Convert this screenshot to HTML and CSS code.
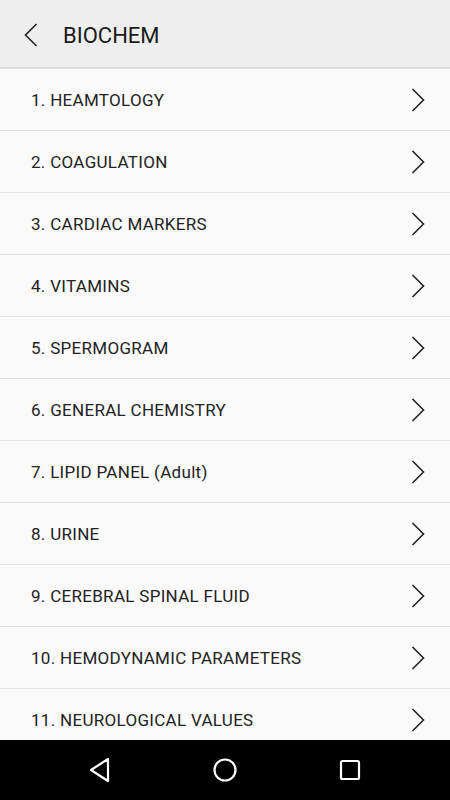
FILE: index.html
```html
<!DOCTYPE html>
<html lang="en">
<head>
    <meta charset="UTF-8">
    <meta name="viewport" content="width=device-width, initial-scale=1.0">
    <title>BIOCHEM</title>
    <link rel="stylesheet" href="styles.css">
</head>
<body>
    <!-- Верхняя панель -->
    <div class="toolbar">
        <a class="back" href="#">
            <svg width="14" height="24" viewBox="0 0 14 24"><path d="M12.5 1 L1.5 12 L12.5 23" fill="none" stroke="#222" stroke-width="1.6"/></svg>
        </a>
        <h1>BIOCHEM</h1>
    </div>

    <!-- Список разделов -->
    <div class="list">
        <a class="row" href="#"><span>1. HEAMTOLOGY</span><svg class="chev" width="14" height="24" viewBox="0 0 14 24"><path d="M1.5 1 L12.5 12 L1.5 23" fill="none" stroke="#222" stroke-width="1.6"/></svg></a>
        <a class="row" href="#"><span>2. COAGULATION</span><svg class="chev" width="14" height="24" viewBox="0 0 14 24"><path d="M1.5 1 L12.5 12 L1.5 23" fill="none" stroke="#222" stroke-width="1.6"/></svg></a>
        <a class="row" href="#"><span>3. CARDIAC MARKERS</span><svg class="chev" width="14" height="24" viewBox="0 0 14 24"><path d="M1.5 1 L12.5 12 L1.5 23" fill="none" stroke="#222" stroke-width="1.6"/></svg></a>
        <a class="row" href="#"><span>4. VITAMINS</span><svg class="chev" width="14" height="24" viewBox="0 0 14 24"><path d="M1.5 1 L12.5 12 L1.5 23" fill="none" stroke="#222" stroke-width="1.6"/></svg></a>
        <a class="row" href="#"><span>5. SPERMOGRAM</span><svg class="chev" width="14" height="24" viewBox="0 0 14 24"><path d="M1.5 1 L12.5 12 L1.5 23" fill="none" stroke="#222" stroke-width="1.6"/></svg></a>
        <a class="row" href="#"><span>6. GENERAL CHEMISTRY</span><svg class="chev" width="14" height="24" viewBox="0 0 14 24"><path d="M1.5 1 L12.5 12 L1.5 23" fill="none" stroke="#222" stroke-width="1.6"/></svg></a>
        <a class="row" href="#"><span>7. LIPID PANEL (Adult)</span><svg class="chev" width="14" height="24" viewBox="0 0 14 24"><path d="M1.5 1 L12.5 12 L1.5 23" fill="none" stroke="#222" stroke-width="1.6"/></svg></a>
        <a class="row" href="#"><span>8. URINE</span><svg class="chev" width="14" height="24" viewBox="0 0 14 24"><path d="M1.5 1 L12.5 12 L1.5 23" fill="none" stroke="#222" stroke-width="1.6"/></svg></a>
        <a class="row" href="#"><span>9. CEREBRAL SPINAL FLUID</span><svg class="chev" width="14" height="24" viewBox="0 0 14 24"><path d="M1.5 1 L12.5 12 L1.5 23" fill="none" stroke="#222" stroke-width="1.6"/></svg></a>
        <a class="row" href="#"><span>10. HEMODYNAMIC PARAMETERS</span><svg class="chev" width="14" height="24" viewBox="0 0 14 24"><path d="M1.5 1 L12.5 12 L1.5 23" fill="none" stroke="#222" stroke-width="1.6"/></svg></a>
        <a class="row" href="#"><span>11. NEUROLOGICAL VALUES</span><svg class="chev" width="14" height="24" viewBox="0 0 14 24"><path d="M1.5 1 L12.5 12 L1.5 23" fill="none" stroke="#222" stroke-width="1.6"/></svg></a>
    </div>

    <!-- Системная навигация -->
    <div class="navbar">
        <svg width="24" height="26" viewBox="0 0 24 26"><path d="M20 2 L3 13 L20 24 Z" fill="none" stroke="#fff" stroke-width="2.2" stroke-linejoin="round"/></svg>
        <svg width="26" height="26" viewBox="0 0 26 26"><circle cx="13" cy="13" r="10.5" fill="none" stroke="#fff" stroke-width="2.2"/></svg>
        <svg width="24" height="24" viewBox="0 0 24 24"><rect x="3" y="3" width="18" height="18" rx="1.5" fill="none" stroke="#fff" stroke-width="2.2"/></svg>
    </div>
</body>
</html>
```

FILE: styles.css
```css
html, body {
    height: 100%;
}

body {
    font-family: Roboto, "Liberation Sans", Arial, sans-serif;
    background: #fafafa;
    color: #222222;
    margin: 0;
    padding: 0;
    display: flex;
    flex-direction: column;
    overflow: hidden;
}

/* Верхняя панель */
.toolbar {
    height: 67px;
    flex-shrink: 0;
    background: #eeeeee;
    border-bottom: 2px solid #dcdcdc;
    display: flex;
    align-items: center;
    padding-left: 24px;
}

.toolbar .back {
    display: flex;
    align-items: center;
    margin-top: 2px;
}

.toolbar h1 {
    font-size: 22px;
    font-weight: 400;
    margin: 3px 0 0 25px;
    color: #1a1a1a;
}

/* Список */
.list {
    flex: 1;
    overflow: hidden;
}

.row {
    display: flex;
    justify-content: space-between;
    align-items: center;
    height: 61px;
    padding: 0 25px 0 31px;
    border-bottom: 1px solid #e2e2e2;
    color: #222222;
    text-decoration: none;
    font-size: 17px;
    letter-spacing: 0.3px;
}

.row .chev {
    flex-shrink: 0;
}

/* Навигация */
.navbar {
    height: 60px;
    flex-shrink: 0;
    background: #000000;
    display: flex;
    justify-content: space-around;
    align-items: center;
    padding: 0 37.5px;
}
```
